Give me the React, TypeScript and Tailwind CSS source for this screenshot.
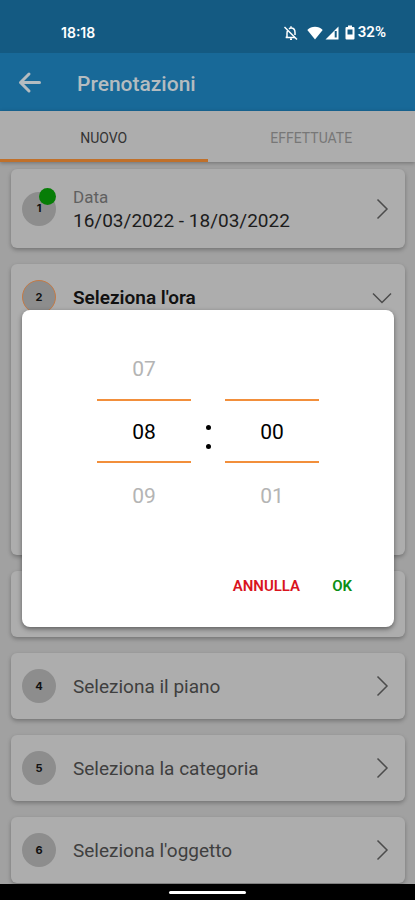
import { ReactNode } from "react";

function Chevron({ open }: { open?: boolean }) {
    return (
        <svg viewBox="0 0 24 24" className="size-6 shrink-0" fill="none" stroke="#4c4c4c" strokeWidth="1.5">
            {open ? <path d="M3 8.500l9 9 9-9" /> : <path d="M7.500 2.500l9.500 9.500-9.500 9.500" />}
        </svg>
    );
}

type StepProps = {
    number: number;
    title: string;
    label?: string;
    done?: boolean;
    open?: boolean;
    children?: ReactNode;
};

function Step({ number, title, label, done, open, children }: StepProps) {
    return (
        <section className="rounded-md bg-[#adadad] shadow-[0_2px_4px_rgba(0,0,0,0.28)]">
            <button type="button" aria-expanded={!!open} className={`flex w-full items-center px-[11px] text-left ${label ? "h-[79px]" : "h-[66px]"}`}>
                <span
                    className={`relative flex size-[34px] shrink-0 items-center justify-center rounded-full bg-[#8d8d8d] font-[Inter] text-[11px] font-bold text-[#111] ${open ? "border border-[#c47a45]" : ""}`}
                >
                    {number}
                    {done && <span className="absolute -top-1 right-0 size-[17px] rounded-full bg-[#077d07]" />}
                </span>
                <span className="ml-[17px] flex-1 pt-px">
                    {label && <span className="block text-[17px] leading-6 text-[#606060]">{label}</span>}
                    <span
                        className={`block text-[19px] leading-6 ${open ? "pt-px font-semibold text-[#111]" : label ? "text-[#1c1c1c]" : "text-[#3f3f3f]"}`}
                    >
                        {title}
                    </span>
                </span>
                <Chevron open={open} />
            </button>
            {children}
        </section>
    );
}

type WheelProps = {
    label: string;
    prev: string;
    value: string;
    next: string;
};

function Wheel({ label, prev, value, next }: WheelProps) {
    return (
        <div className="w-[94px] text-center text-[21px] leading-6">
            <div className="flex h-[62px] items-center justify-center pt-0.5 text-[#b4b4b4]">{prev}</div>
            <input
                aria-label={label}
                defaultValue={value}
                inputMode="numeric"
                className="block h-16 w-full border-y-2 border-[#f28f3b] bg-transparent pt-0.5 text-center text-black outline-none"
            />
            <div className="flex h-16 items-center justify-center pt-0.5 text-[#b4b4b4]">{next}</div>
        </div>
    );
}

function StatusBar() {
    return (
        <div className="flex h-[53px] items-center bg-[#145a82] pt-3 pr-[29px] pl-[61px] font-[Inter] text-sm font-semibold text-white">
            <span className="flex-1">18:18</span>
            <svg viewBox="0 0 16 16" className="size-4" fill="none" stroke="white" strokeWidth="1.5">
                <path d="M1.500 2l12.500 12.500" />
                <path d="M4.600 5.600C4 6.500 4 7.500 4 8.500V12l-1.200 .5H12M6 3.800C7 3 8 3 8 3c2.500 0 4 2 4 4.500V10M8 1.300V3M7 14.300h2" />
            </svg>
            <svg viewBox="0 0 16 14" className="ml-2 h-3.5 w-4" fill="white">
                <path d="M8 13.500L0.300 4C2.500 1.800 5 .8 8 .8s5.500 1 7.700 3.200z" />
            </svg>
            <svg viewBox="0 0 14 14" className="ml-0.5 size-3.5">
                <path d="M13.500 .5v13H.5z" fill="white" />
                <path d="M10.700 5v6.500" stroke="#145a82" strokeWidth="2" />
            </svg>
            <svg viewBox="0 0 10 15" className="ml-1.5 h-[15px] w-2.5">
                <path d="M3 0.500h4V2h1.500Q9.500 2 9.500 3v10.500q0 1-1 1h-7q-1 0-1-1V3q0-1 1-1H3z" fill="white" />
                <path d="M2.500 4.500h5v5h-5z" fill="#145a82" />
            </svg>
            <span className="ml-[3px] font-[Roboto] text-[15px]">32%</span>
        </div>
    );
}

export default function App() {
    return (
        <div className="relative flex min-h-screen flex-col bg-[#a1a1a1] font-[Roboto,sans-serif]">
            <StatusBar />
            <header className="flex h-[58px] items-center bg-[#186998] pl-[18px] text-[#b4bcc0]">
                <button type="button" aria-label="Indietro">
                    <svg viewBox="0 0 24 24" className="size-6" fill="none" stroke="currentColor" strokeWidth="3" strokeLinecap="round" strokeLinejoin="round">
                        <path d="M21.500 12.500H2.500M11 4L2.500 12.500l8.500 8.500" />
                    </svg>
                </button>
                <h1 className="ml-[35px] pt-1 text-[21px] leading-6 font-medium">Prenotazioni</h1>
            </header>
            <nav className="grid h-[51px] grid-cols-2 bg-[#adadad] text-sm shadow-[0_1px_4px_rgba(0,0,0,0.3)]">
                <button type="button" className="border-b-3 border-[#c0702a] pt-1.5 text-[#333]">NUOVO</button>
                <button type="button" className="border-b-3 border-transparent pt-1.5 text-[#777]">EFFETTUATE</button>
            </nav>

            <main className="flex flex-1 flex-col gap-4 px-2.5 pt-[7px] pb-px pl-[11px]">
                <Step number={1} label="Data" title="16/03/2022 - 18/03/2022" done />
                <Step number={2} title="Seleziona l'ora" open>
                    <div className="h-[225px]" />
                </Step>
                <Step number={3} title="" />
                <Step number={4} title="Seleziona il piano" />
                <Step number={5} title="Seleziona la categoria" />
                <Step number={6} title="Seleziona l'oggetto" />
            </main>

            <footer className="flex h-4 items-center justify-center bg-black">
                <div className="h-[3px] w-[77px] rounded-full bg-white" />
            </footer>

            <div className="absolute inset-0 flex items-center pt-[53px] pr-[21px] pb-4 pl-[22px]">
                <div role="dialog" aria-label="Seleziona l'ora" className="flex-1 rounded-lg bg-white pt-[27px] pb-[27px] shadow-[0_2px_5px_rgba(0,0,0,0.45)]">
                    <div className="flex items-center justify-center">
                        <Wheel label="Ore" prev="07" value="08" next="09" />
                        <div className="flex w-[34px] flex-col items-center gap-3.5 pt-2.5">
                            <span className="size-[5px] rounded-full bg-black" />
                            <span className="size-[5px] rounded-full bg-black" />
                        </div>
                        <Wheel label="Minuti" prev="" value="00" next="01" />
                    </div>
                    <div className="mt-[45px] flex justify-end gap-8 pr-[42px] text-[15px] leading-7 font-semibold">
                        <button type="button" className="text-[#d9141e]">ANNULLA</button>
                        <button type="button" className="text-[#0b8f14]">OK</button>
                    </div>
                </div>
            </div>
        </div>
    );
}
